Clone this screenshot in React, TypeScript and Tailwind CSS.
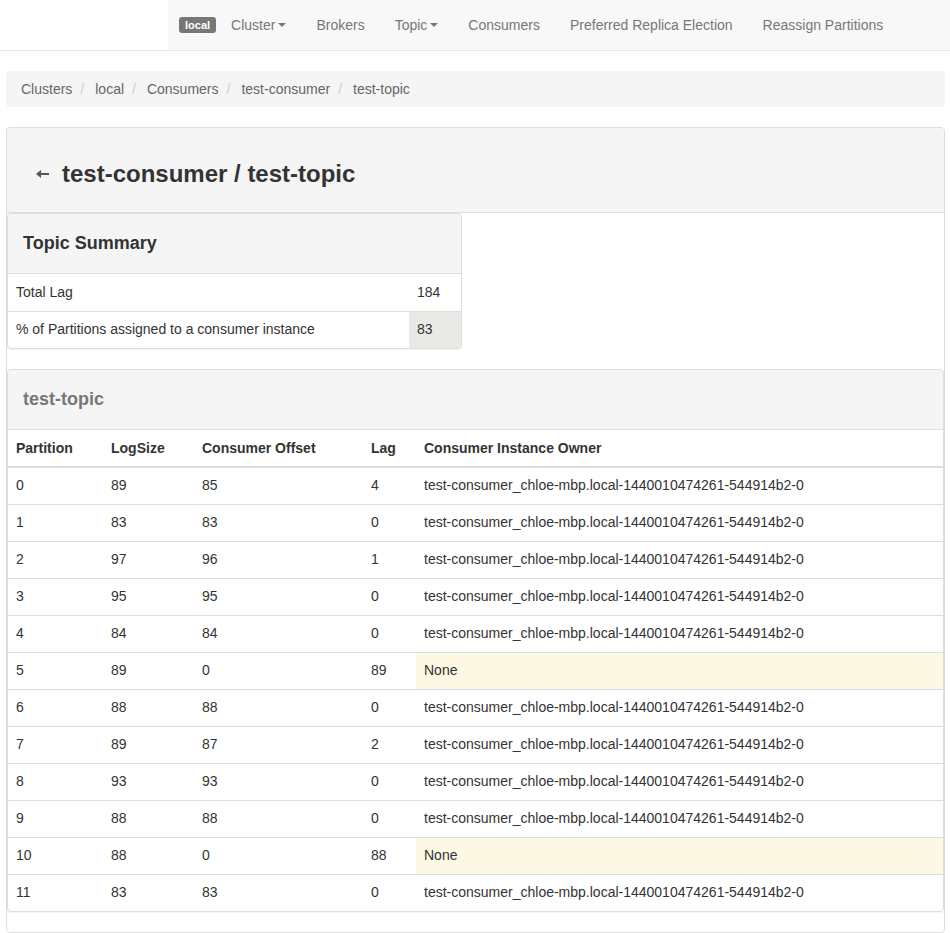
import type { ReactNode } from "react";

type Row = { partition: number; logSize: number; offset: number; lag: number; owner: string | null };

const OWNER = "test-consumer_chloe-mbp.local-1440010474261-544914b2-0";

const rows: Row[] = [
    { partition: 0, logSize: 89, offset: 85, lag: 4, owner: OWNER },
    { partition: 1, logSize: 83, offset: 83, lag: 0, owner: OWNER },
    { partition: 2, logSize: 97, offset: 96, lag: 1, owner: OWNER },
    { partition: 3, logSize: 95, offset: 95, lag: 0, owner: OWNER },
    { partition: 4, logSize: 84, offset: 84, lag: 0, owner: OWNER },
    { partition: 5, logSize: 89, offset: 0, lag: 89, owner: null },
    { partition: 6, logSize: 88, offset: 88, lag: 0, owner: OWNER },
    { partition: 7, logSize: 89, offset: 87, lag: 2, owner: OWNER },
    { partition: 8, logSize: 93, offset: 93, lag: 0, owner: OWNER },
    { partition: 9, logSize: 88, offset: 88, lag: 0, owner: OWNER },
    { partition: 10, logSize: 88, offset: 0, lag: 88, owner: null },
    { partition: 11, logSize: 83, offset: 83, lag: 0, owner: OWNER },
];

const Caret = () => (
    <span className="inline-block ml-[3px] align-middle w-0 h-0 border-t-[4px] border-t-[#777] border-x-[4px] border-x-transparent" />
);

const NavLink = ({ children }: { children: ReactNode }) => (
    <a className="px-[15px] leading-[50px] text-[14px] text-[#777] flex items-center">{children}</a>
);

const Navbar = () => (
    <nav className="flex h-[51px] border-b border-[#e7e7e7]">
        <div className="w-[168px] bg-white" />
        <div className="flex-1 flex items-center bg-[#f8f8f8]">
            <span className="ml-[11px] bg-[#777] text-white text-[11px] font-bold rounded-[3px] px-[6px] leading-[16px]">local</span>
            <NavLink>Cluster<Caret /></NavLink>
            <NavLink>Brokers</NavLink>
            <NavLink>Topic<Caret /></NavLink>
            <NavLink>Consumers</NavLink>
            <NavLink>Preferred Replica Election</NavLink>
            <NavLink>Reassign Partitions</NavLink>
        </div>
    </nav>
);

const Breadcrumb = () => {
    const items = ["Clusters", "local", "Consumers", "test-consumer", "test-topic"];
    return (
        <div className="mt-[20px] bg-[#f5f5f5] rounded-[4px] px-[15px] h-[36px] flex items-center text-[14px] text-[#666]">
            {items.map((item, i) => (
                <span key={item} className="flex items-center">
                    {i > 0 && <span className="text-[#ccc] pl-[8px] pr-[11px]">/</span>}
                    {item}
                </span>
            ))}
        </div>
    );
};

const BackArrow = () => (
    <svg width="14" height="8" viewBox="0 0 14 8" className="mr-[12px]">
        <path d="M0 4 L5 0 L5 3 L13 3 L13 5 L5 5 L5 8 Z" fill="#555" />
    </svg>
);

const TopicSummary = () => (
    <div className="w-[455px] border border-[#ddd] rounded-[4px] bg-white shadow-[0_1px_1px_rgba(0,0,0,0.05)] mb-[20px] overflow-hidden">
        <div className="h-[60px] bg-[#f5f5f5] border-b border-[#ddd] flex items-center px-[15px]">
            <h3 className="text-[18px] font-bold text-[#333]">Topic Summary</h3>
        </div>
        <table className="w-full text-[14px] text-[#333] border-collapse">
            <tbody>
                <tr className="h-[37px]">
                    <td className="px-[8px]">Total Lag</td>
                    <td className="px-[8px] w-[52px]">184</td>
                </tr>
                <tr className="h-[37px] border-t border-[#ddd]">
                    <td className="px-[8px]">% of Partitions assigned to a consumer instance</td>
                    <td className="px-[8px] w-[52px] bg-[#e9e9e6]">83</td>
                </tr>
            </tbody>
        </table>
    </div>
);

const PartitionTable = () => (
    <div className="border border-[#ddd] rounded-[4px] bg-white shadow-[0_1px_1px_rgba(0,0,0,0.05)] overflow-hidden">
        <div className="h-[60px] bg-[#f5f5f5] border-b border-[#ddd] flex items-center px-[15px]">
            <h3 className="text-[18px] font-bold text-[#777]">test-topic</h3>
        </div>
        <table className="w-full table-fixed text-[14px] text-[#333] border-collapse">
            <thead>
                <tr className="h-[37px] border-b-2 border-[#ddd] text-left">
                    <th className="w-[95px] px-[8px] font-bold">Partition</th>
                    <th className="w-[91px] px-[8px] font-bold">LogSize</th>
                    <th className="w-[169px] px-[8px] font-bold">Consumer Offset</th>
                    <th className="w-[53px] px-[8px] font-bold">Lag</th>
                    <th className="px-[8px] font-bold">Consumer Instance Owner</th>
                </tr>
            </thead>
            <tbody>
                {rows.map((r, i) => (
                    <tr key={r.partition} className={`h-[37px] ${i > 0 ? "border-t border-[#ddd]" : ""}`}>
                        <td className="px-[8px]">{r.partition}</td>
                        <td className="px-[8px]">{r.logSize}</td>
                        <td className="px-[8px]">{r.offset}</td>
                        <td className="px-[8px]">{r.lag}</td>
                        <td className={`px-[8px] ${r.owner ? "" : "bg-[#fcf8e3]"}`}>{r.owner ?? "None"}</td>
                    </tr>
                ))}
            </tbody>
        </table>
    </div>
);

export default function App() {
    return (
        <div className="min-h-[933px] bg-white font-['Liberation_Sans',Arial,sans-serif]">
            <Navbar />
            <div className="ml-[6px] w-[939px]">
                <Breadcrumb />
                <div className="mt-[20px] border border-[#ddd] rounded-[4px] bg-white">
                    <div className="h-[85px] pt-[7px] bg-[#f5f5f5] border-b border-[#ddd] flex items-center pl-[29px] rounded-t-[4px]">
                        <BackArrow />
                        <h2 className="text-[24px] font-bold text-[#333]">test-consumer / test-topic</h2>
                    </div>
                    <div className="pb-[20px]">
                        <TopicSummary />
                        <PartitionTable />
                    </div>
                </div>
            </div>
        </div>
    );
}
